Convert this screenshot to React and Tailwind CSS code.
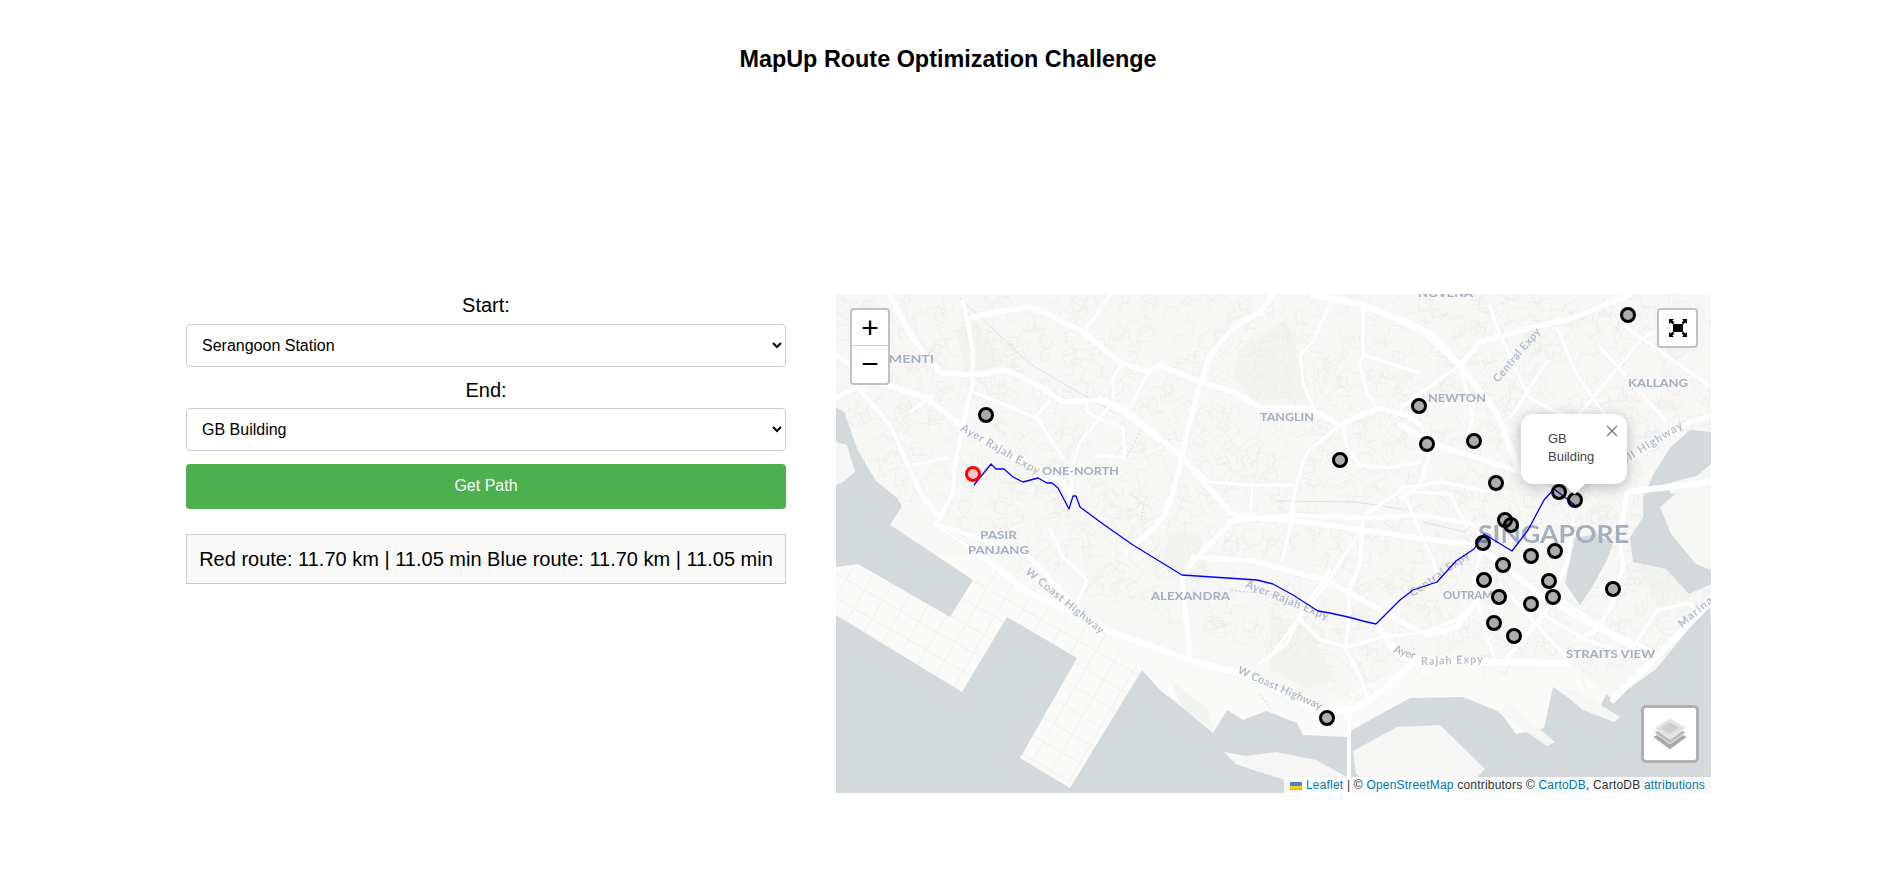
const markers = [
  [150, 121], [792, 21], [583, 112], [591, 150], [638, 147], [504, 166], [660, 189], [723, 198], [739, 206],
  [669, 226], [675, 231], [647, 249], [719, 257], [695, 262], [667, 271], [648, 286], [713, 287], [777, 295],
  [663, 303], [717, 303], [695, 310], [658, 329], [678, 342], [491, 424],
];

const route = '138,191 155,170 160,175 168,175 177,183 187,188 202,184 211,189 216,189 222,194 233,215 237,202 240,202 244,213 267,230 297,251 346,281 421,286 437,290 457,301 482,317 494,319 512,323 527,327 540,330 564,306 577,296 601,288 620,267 638,255 648,240 676,257 692,236 708,206 718,195 739,211';

const water = [
  '0,113 8,118 22,157 40,187 61,204 66,212 54,231 137,286 114,323 22,270 0,273',
  '0,321 126,398 171,323 241,364 184,464 234,494 306,376 324,396 347,414 377,439 391,416 407,426 430,417 461,429 467,441 511,443 516,436 574,404 627,403 664,418 680,440 708,434 717,393 733,404 747,416 764,413 770,400 777,406 820,375 874,309 875,332 875,499 0,499',
  '739,244 760,240 777,249 771,266 756,293 744,311 729,289 734,266',
  '875,138 854,136 834,154 817,181 807,204 807,224 794,243 797,268 830,275 853,300 875,290',
];

const landPatches = [
  '0,148 11,151 19,178 7,188 0,191',
  '388,458 400,470 420,477 446,485 470,499 511,499 511,483 480,466 440,458 410,462',
  '517,457 561,433 604,431 649,475 625,499 545,499 520,480',
  '662,418 672,409 719,448 711,452',
  '727,396 740,396 784,423 778,428 747,416',
  '824,213 875,170 875,276 860,270 835,240',
  '830,190 875,178 875,195 835,200',
];

const parks = [
  '404,54 451,24 477,108 424,111 397,84',
  '434,320 470,330 501,386 470,395 434,375',
  '334,240 362,238 372,282 350,292 325,270',
  '335,386 372,415 377,436 345,412',
  '797,269 860,280 855,302 825,316',
  '824,213 875,170 875,276 860,270 835,240',
  '138,24 170,70 130,80 120,40',
];

// reclaimed land along the south, lighter and with no street blocks
const reclaimed = '0,260 150,262 264,334 354,366 481,416 577,369 734,369 777,406 640,499 0,499';

const roads = [
  [5, '54,1 71,34 91,64 104,79 137,81 171,76 201,91 227,108 267,106 287,114 344,161 394,218 402,222 470,228 527,236 584,244 637,251'],
  [4, '127,8 131,24 137,58 137,88 127,131 119,171 117,198 104,224'],
  [5, '134,24 161,18 194,13 214,21 247,38 284,68 311,78 324,71 364,88 397,98 427,114 474,114 504,131 541,114 571,121 584,131'],
  [5, '0,61 41,88 91,104 124,131 161,154 227,188 237,204'],
  [4, '0,104 21,93 54,131 84,198 104,224 100,230 190,260 245,317'],
  [5, '437,1 424,18 397,34 374,61 364,91 351,138 346,164 337,198 327,224 311,240 290,258'],
  [3, '251,34 274,1'],
  [3, '277,108 244,148 234,178 237,208'],
  [3, '137,98 201,124 227,164'],
  [3, '251,108 251,118 271,128 287,134 289,164 261,161'],
  [3, '199,124 214,106'],
  [3, '287,68 277,84 277,104'],
  [3, '311,81 294,114'],
  [3, '74,118 97,101'],
  [3, '77,171 111,164'],
  [3, '507,131 511,154 524,171 551,174 584,168'],
  [3, '504,131 471,158 461,188 454,224'],
  [3, '347,164 374,188 414,191 457,191'],
  [2, '417,191 414,221'],
  [3, '494,11 477,48 464,61 467,88 477,114'],
  [6, '477,1 527,11 584,34 624,71 661,120 684,178 720,200'],
  [3, '527,11 527,61 524,71 531,98 541,114'],
  [3, '527,61 581,78'],
  [4, '264,104 287,118 347,164'],
  [4, '402,227 451,221 531,224 584,221 637,230'],
  [5, '357,263 418,267 491,287 514,299 544,316 581,336 591,341 621,333 641,306'],
  [5, '402,222 357,267 346,283 354,363'],
  [3, '458,217 446,267'],
  [4, '527,226 524,269 514,296 512,333 509,353 524,383 531,403'],
  [6, '541,331 561,359 577,366 647,368 687,368 734,369'],
  [6, '147,263 194,299 237,319 264,334 354,366 401,379 427,389 481,416 514,416 531,408 547,396 577,369'],
  [2, '101,231 151,266 204,303'],
  [4, '513,416 513,499'],
  [3, '424,369 451,349 467,316 494,276'],
  [3, '434,363 464,323 491,289 507,263 527,233'],
  [3, '464,326 484,346 511,353 547,343 587,339 621,326 641,306'],
  [3, '214,236 227,263 251,286 237,319'],
  [3, '530,220 564,197 614,200 631,233'],
  [3, '569,203 597,267 603,287'],
  [5, '564,28 597,41 624,71 644,48 694,34 737,24 794,1'],
  [3, '654,11 661,34 681,78 694,104 727,121'],
  [3, '721,34 741,81 771,124'],
  [3, '740,124 804,47 830,30'],
  [3, '711,67 675,123'],
  [3, '790,33 875,93'],
  [3, '764,53 830,127'],
  [5, '564,131 601,151 654,168 684,178'],
  [3, '624,71 637,124 631,144'],
  [3, '564,114 624,71'],
  [3, '597,148 584,191 564,204'],
  [3, '564,194 607,188 657,198'],
  [5, '647,256 707,303 797,353 807,363'],
  [4, '737,226 731,269 711,316 687,346 671,363'],
  [4, '784,249 787,273 777,309 761,336 741,346'],
  [3, '704,319 751,346 797,363'],
  [3, '721,303 771,336 814,356'],
  [3, '797,353 821,316 854,309 861,319'],
  [6, '777,406 874,309'],
  [6, '791,198 875,188'],
  [5, '791,198 784,241'],
  [4, '751,188 797,164 847,131 875,121'],
  [3, '647,250 637,290 650,340 660,368'],
  [3, '664,290 700,330 735,369'],
];

const faintLines = [
  '124,4 194,70 280,120',
  '586,228 630,238 640,222',
  '440,207 520,208 565,215',
];

const railDash = [
  '305,136 290,165',
  '295,200 308,210 305,226',
  '395,296 440,301 460,305',
  '424,400 435,415',
];

const labels = [
  ['CLEMENTI', 28, 69, 70, 12],
  ['ONE-NORTH', 206, 181, 77, 12],
  ['TANGLIN', 424, 127, 54, 12],
  ['NEWTON', 592, 108, 58, 12],
  ['KALLANG', 792, 93, 60, 12],
  ['NOVENA', 582, 3, 55, 12],
  ['PASIR', 144, 245, 37, 12],
  ['PANJANG', 132, 260, 61, 12],
  ['ALEXANDRA', 315, 306, 79, 12],
  ['OUTRAM', 607, 305, 50, 12],
  ['STRAITS VIEW', 730, 364, 89, 12],
  ['SINGAPORE', 642, 249, 151, 24],
];

const roadLabels = [
  ['Ayer Rajah Expy', 124, 136, 89, 30],
  ['Central Expy', 662, 89, 67, 310],
  ['W Coast Highway', 189, 279, 97, 39],
  ['W Coast Highway', 401, 379, 91, 24],
  ['Ayer Rajah Expy', 409, 293, 88, 22],
  ['Central Expy', 577, 303, 70, 325],
  ['Nicoll Highway', 771, 181, 90, 328],
  ['Marina South', 846, 334, 80, 320],
  ['Ayer', 557, 358, 22, 20],
  ['Rajah Expy', 585, 371, 62, 358],
];

// faint street blocks, fixed seed so the texture stays the same
function buildStreets() {
  const out = [];
  let seed = 17;
  const next = () => {
    seed = (seed * 16807) % 2147483647;
    return seed / 2147483647;
  };
  for (let i = 0; i < 2200; i++) {
    const x = next() * 875;
    const y = next() * 430;
    if (x < 100 && y > 200) continue;
    if (x >= 100 && y > 225 + (x - 100) * 0.42) continue;
    if (x > 530 && y > 370) continue;
    let a = next() * 6.28;
    let px = x;
    let py = y;
    let d = `M${x.toFixed(1)} ${y.toFixed(1)}`;
    for (let s = 0; s < 3; s++) {
      const l = 5 + next() * 9;
      px += Math.cos(a) * l;
      py += Math.sin(a) * l;
      d += `L${px.toFixed(1)} ${py.toFixed(1)}`;
      a += (next() < 0.5 ? 1 : -1) * 1.5;
    }
    out.push(d);
  }
  return out.join('');
}
const streets = buildStreets();

function MapLayer() {
  return (
    <svg viewBox="0 0 875 499" className="absolute inset-0 h-full w-full">
      <defs>
        <clipPath id="port">
          <polygon points="22,270 114,323 137,286 150,262 264,334 306,376 234,494 184,464 241,364 171,323 126,398 0,321 0,273" />
        </clipPath>
      </defs>
      <g className="blur-[0.5px]">
        <rect width="875" height="499" fill="#f7f7f5" />
        <polygon points={reclaimed} fill="#fafaf9" />
        {parks.map((p, i) => <polygon key={i} points={p} fill="#f2f4f0" />)}
        <path d={streets} stroke="#ececea" strokeWidth="0.8" fill="none" />
        {water.map((p, i) => <polygon key={i} points={p} fill="#d4dadc" />)}
        {landPatches.map((p, i) => <polygon key={i} points={p} fill="#f6f7f4" />)}
        <g clipPath="url(#port)">
          <g transform="rotate(30 100 320)" stroke="#f0f0ee" strokeWidth="1">
            {Array.from({ length: 16 }, (_, i) => <line key={i} x1="-100" x2="400" y1={230 + i * 21} y2={230 + i * 21} />)}
            {Array.from({ length: 24 }, (_, i) => <line key={i} y1="150" y2="600" x1={-100 + i * 21} x2={-100 + i * 21} />)}
          </g>
        </g>
        {faintLines.map((p, i) => <polyline key={i} points={p} fill="none" stroke="#dfe3e6" strokeWidth="1" />)}
        {railDash.map((p, i) => <polyline key={i} points={p} fill="none" stroke="#e8cdd0" strokeWidth="1" strokeDasharray="2 2" />)}
        {roads.map(([w, p], i) => (
          <polyline key={i} points={p} fill="none" stroke="#ffffff" strokeWidth={w} strokeLinejoin="round" strokeLinecap="round" />
        ))}
        <g fontFamily="Lato, 'Liberation Sans', sans-serif" fontWeight="700" fill="#a5b0bf">
          {labels.map(([t, x, y, len, size]) => (
            <text key={t} x={x} y={y} fontSize={size} textLength={len} lengthAdjust="spacingAndGlyphs">{t}</text>
          ))}
          {roadLabels.map(([t, x, y, len, rot], i) => (
            <text key={i} transform={`translate(${x} ${y}) rotate(${rot})`} fontSize="11" fontWeight="700" fill="#b4bdca" textLength={len}>{t}</text>
          ))}
        </g>
      </g>
      <polyline points={route} fill="none" stroke="#0000ff" strokeWidth="1.3" strokeLinejoin="round" />
      <circle cx="137" cy="180" r="6.5" fill="#ff0000" fillOpacity="0.2" stroke="#ff0000" strokeWidth="3" />
      {markers.map(([x, y], i) => (
        <circle key={i} cx={x} cy={y} r="6.5" fill="#000000" fillOpacity="0.3" stroke="#000000" strokeWidth="3" />
      ))}
    </svg>
  );
}

function FullscreenIcon() {
  return (
    <svg width="18" height="18" viewBox="0 0 18 18" fill="#000">
      <rect x="4" y="5" width="10" height="8" rx="1" />
      <path d="M0 0h5l-1.6 1.6 2 2-1.8 1.8-2-2L0 5z" />
      <path d="M18 0h-5l1.6 1.6-2 2 1.8 1.8 2-2L18 5z" />
      <path d="M0 18h5l-1.6-1.6 2-2-1.8-1.8-2 2L0 13z" />
      <path d="M18 18h-5l1.6-1.6-2-2 1.8-1.8 2 2L18 13z" />
    </svg>
  );
}

function LayersIcon() {
  return (
    <svg width="32" height="32" viewBox="0 0 32 32">
      <polygon points="0,19 16,10 32,19 16,31" fill="#a8a8a8" stroke="#9a9a9a" strokeWidth="0.5" />
      <polygon points="0,14.5 16,5 32,14.5 16,26" fill="#bdbdbd" stroke="#ffffff" strokeWidth="0.7" />
      <polygon points="0,10 16,0 32,10 16,21" fill="#e2e2e2" stroke="#ffffff" strokeWidth="0.7" />
      <polygon points="7,10 16,4 25,10 16,16" fill="#cfcfcf" />
    </svg>
  );
}

function UkraineFlag() {
  return (
    <svg width="12" height="8" viewBox="0 0 12 8" className="mr-1 inline-block">
      <rect width="12" height="4" fill="#4c7be1" />
      <rect y="4" width="12" height="4" fill="#ffd500" />
      <rect y="6.5" width="12" height="1.5" fill="#e0bc00" />
    </svg>
  );
}

function Field({ label, value, options, labelClass }) {
  return (
    <div>
      <label className={`block text-center text-[20px] leading-[23px] text-black ${labelClass}`}>{label}</label>
      <select defaultValue={value} className="h-[43px] w-full rounded border border-[#ccc] bg-white pl-[11px] text-[16px] text-black">
        {options.map((o) => <option key={o}>{o}</option>)}
      </select>
    </div>
  );
}

const places = ['Serangoon Station', 'GB Building'];

export default function App() {
  return (
    <div className="h-[891px] bg-white font-['Liberation_Sans',Arial,sans-serif] text-black">
      <h1 className="pt-[45px] pl-1 text-center text-[23.4px] leading-[28px] font-bold">MapUp Route Optimization Challenge</h1>
      <div className="mt-[221px] flex gap-[50px] pl-[186px]">
        <div className="w-[600px]">
          <Field label="Start:" value="Serangoon Station" options={places} labelClass="mb-[7px]" />
          <div className="mt-[12px]">
            <Field label="End:" value="GB Building" options={places} labelClass="mb-[6px]" />
          </div>
          <button className="mt-[13px] h-[45px] w-full rounded bg-[#4caf50] pb-px text-[16px] text-white">Get Path</button>
          <div className="mt-[25px] flex h-[50px] items-center justify-center border border-[#ccc] bg-[#f9f9f9] text-[20px] whitespace-nowrap">
            Red route: 11.70 km | 11.05 min Blue route: 11.70 km | 11.05 min
          </div>
        </div>

        <div className="relative h-[499px] w-[875px] overflow-hidden bg-[#d4dadc]">
          <MapLayer />

          <div className="absolute top-[14px] left-[14px] w-[40px] overflow-hidden rounded border-2 border-[#c2c2c2] bg-white text-center">
            <div className="h-[36px] border-b border-[#ccc] text-[30px] leading-[36px]">+</div>
            <div className="h-[37px] text-[30px] leading-[36px]">−</div>
          </div>

          <div className="absolute top-[14px] right-[13px] flex h-[40px] w-[41px] items-center justify-center rounded border-2 border-[#c2c2c2] bg-white">
            <FullscreenIcon />
          </div>

          <div className="absolute right-[12px] bottom-[30px] flex h-[58px] w-[58px] items-center justify-center rounded-[5px] border-[3px] border-[#b0b0b0] bg-white">
            <LayersIcon />
          </div>

          {/* popup */}
          <div className="absolute top-[120px] left-[685px] w-[106px]">
            <div className="h-[70px] rounded-xl bg-white px-[27px] pt-[16px] text-[13px] leading-[18px] text-[#444] shadow-[0_3px_14px_rgba(0,0,0,0.25)]">
              GB Building
            </div>
            <div className="absolute top-[70px] left-1/2 -ml-5 h-5 w-10 overflow-hidden">
              <div className="mx-auto -mt-[10px] h-[17px] w-[17px] rotate-45 bg-white shadow-[0_3px_14px_rgba(0,0,0,0.25)]" />
            </div>
            <svg width="12" height="12" viewBox="0 0 12 12" className="absolute top-[11px] right-[9px]" stroke="#757575" strokeWidth="1.2">
              <path d="M1 1l10 10M11 1L1 11" />
            </svg>
          </div>

          <div className="absolute right-0 bottom-0 bg-white/80 px-[6px] text-[12px] leading-[16px] tracking-[0.2px] text-[#333]">
            <UkraineFlag />
            <a className="text-[#0078a8]">Leaflet</a> | © <a className="text-[#0078a8]">OpenStreetMap</a> contributors © <a className="text-[#0078a8]">CartoDB</a>, CartoDB <a className="text-[#0078a8]">attributions</a>
          </div>
        </div>
      </div>
    </div>
  );
}
